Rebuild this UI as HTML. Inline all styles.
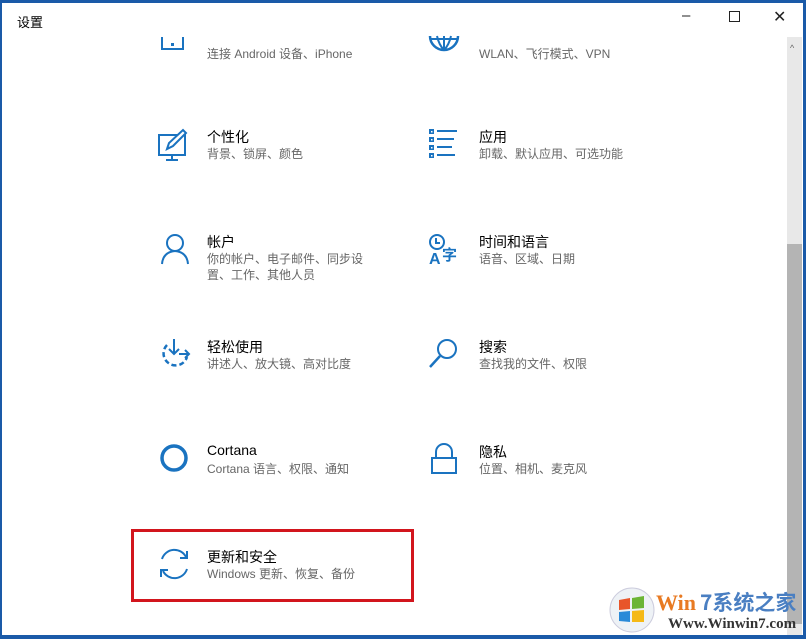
<!DOCTYPE html>
<html><head><meta charset="utf-8"><style>
*{margin:0;padding:0;box-sizing:border-box}
body{width:806px;height:638px;overflow:hidden;background:#1a5aa8;font-family:"Liberation Sans","Noto Sans CJK SC",sans-serif;position:relative}
.win{position:absolute;left:2px;top:3px;width:801px;height:632px;background:#fff;overflow:hidden}
.title{position:absolute;left:15px;top:9px;font-size:13px;color:#000}
.ctl{position:absolute;top:6px;font-size:15px;color:#222}
.sb{position:absolute;left:785px;top:34px;width:15px;height:600px;background:#e8e8e8}
.thumb{position:absolute;left:785px;top:241px;width:15px;height:380px;background:#b4b4b4}
.it{position:absolute}
.it svg{position:absolute;left:0;top:0}
.t{position:absolute;left:50px;top:0;font-size:14px;color:#000;white-space:nowrap}
.s{position:absolute;left:50px;top:19px;font-size:12px;color:#666;line-height:16px;white-space:nowrap}
.red{position:absolute;left:129px;top:526px;width:283px;height:73px;border:3px solid #d2151d}
.logo{position:absolute;left:608px;top:584px;width:192px;height:50px}
</style></head><body>
<div class="win">
<div class="title">设置</div>
<div class="ctl" style="left:680px;top:4px">–</div>
<div class="ctl" style="left:727px;top:8px;width:11px;height:11px;border:1px solid #222"></div>
<div class="ctl" style="left:771px;top:4px;font-size:16px">✕</div>
<div class="sb"></div><div class="thumb"></div>
<div style="position:absolute;left:788px;top:40px;font-size:9px;color:#666">^</div>

<!-- row 0 (clipped) -->
<div class="it" style="left:155px;top:24px">
<svg width="36" height="30"><path d="M5 10 V22 H26 V10" fill="none" stroke="#1a73c0" stroke-width="2"/><rect x="14" y="16" width="3" height="3" fill="#1a73c0"/></svg>
<div class="s" style="left:50px">连接 Android 设备、iPhone</div></div>
<div class="it" style="left:425px;top:24px">
<svg width="36" height="30"><path d="M3 9 A14 14 0 0 0 31 9" fill="none" stroke="#1a73c0" stroke-width="2.5"/><path d="M3 12 H31 M10 9 Q12 18 17 23 M24 9 Q22 18 17 23 M17 9 V23" fill="none" stroke="#1a73c0" stroke-width="2"/></svg>
<div class="s" style="left:52px">WLAN、飞行模式、VPN</div></div>

<!-- row1 -->
<div class="it" style="left:155px;top:124px">
<svg width="36" height="36"><rect x="2" y="8" width="26" height="20" fill="none" stroke="#1a73c0" stroke-width="2"/><path d="M15 28 V33 M9 33 H21" stroke="#1a73c0" stroke-width="2"/><path d="M10 22 L12 16 L26 3 L29 6 L16 19 Z" fill="#fff" stroke="#1a73c0" stroke-width="2"/></svg>
<div class="t">个性化</div><div class="s">背景、锁屏、颜色</div></div>
<div class="it" style="left:425px;top:124px">
<svg width="36" height="36"><g fill="#1a73c0"><rect x="2" y="2" width="5" height="5"/><rect x="2" y="10" width="5" height="5"/><rect x="2" y="18" width="5" height="5"/><rect x="2" y="26" width="5" height="5"/><rect x="10" y="3" width="20" height="2"/><rect x="10" y="11" width="17" height="2"/><rect x="10" y="19" width="15" height="2"/><rect x="10" y="27" width="18" height="2"/></g><g fill="#fff"><rect x="4" y="4" width="1.5" height="1.5"/><rect x="4" y="12" width="1.5" height="1.5"/><rect x="4" y="20" width="1.5" height="1.5"/><rect x="4" y="28" width="1.5" height="1.5"/></g></svg>
<div class="t" style="left:52px">应用</div><div class="s" style="left:52px">卸载、默认应用、可选功能</div></div>

<!-- row2 -->
<div class="it" style="left:155px;top:229px">
<svg width="36" height="36"><circle cx="18" cy="11" r="8" fill="none" stroke="#1a73c0" stroke-width="2"/><path d="M5 32 Q6 20 18 19 Q30 20 31 32" fill="none" stroke="#1a73c0" stroke-width="2"/></svg>
<div class="t">帐户</div><div class="s">你的帐户、电子邮件、同步设<br>置、工作、其他人员</div></div>
<div class="it" style="left:425px;top:229px">
<svg width="36" height="36"><circle cx="10" cy="10" r="7" fill="none" stroke="#1a73c0" stroke-width="2"/><path d="M9 6 V11 H13" fill="none" stroke="#1a73c0" stroke-width="2"/><text x="2" y="32" font-size="16" font-family="Liberation Sans" fill="#1a73c0" font-weight="bold">A</text><text x="15" y="28" font-size="15" font-family="Noto Sans CJK SC" fill="#1a73c0" font-weight="bold">字</text></svg>
<div class="t" style="left:52px">时间和语言</div><div class="s" style="left:52px">语音、区域、日期</div></div>

<!-- row3 -->
<div class="it" style="left:155px;top:334px">
<svg width="36" height="36"><path d="M10 8 A12 12 0 1 0 30 20" fill="none" stroke="#1a73c0" stroke-width="2.5" stroke-dasharray="5 3"/><path d="M17 2 V17 M12 12 L17 17 L22 12 M22 17 H32 M28 13 L32 17 L28 21" fill="none" stroke="#1a73c0" stroke-width="2"/></svg>
<div class="t">轻松使用</div><div class="s">讲述人、放大镜、高对比度</div></div>
<div class="it" style="left:425px;top:334px">
<svg width="36" height="36"><circle cx="20" cy="12" r="9" fill="none" stroke="#1a73c0" stroke-width="2"/><path d="M13 19 L3 30" stroke="#1a73c0" stroke-width="2.5"/></svg>
<div class="t" style="left:52px">搜索</div><div class="s" style="left:52px">查找我的文件、权限</div></div>

<!-- row4 -->
<div class="it" style="left:155px;top:439px">
<svg width="36" height="36"><circle cx="17" cy="16" r="12" fill="none" stroke="#1a73c0" stroke-width="3.5"/></svg>
<div class="t">Cortana</div><div class="s">Cortana 语言、权限、通知</div></div>
<div class="it" style="left:425px;top:439px">
<svg width="36" height="36"><path d="M9 16 V10 A8 8 0 0 1 25 10 V16" fill="none" stroke="#1a73c0" stroke-width="2"/><rect x="5" y="16" width="24" height="15" fill="none" stroke="#1a73c0" stroke-width="2"/></svg>
<div class="t" style="left:52px">隐私</div><div class="s" style="left:52px">位置、相机、麦克风</div></div>

<!-- row5 -->
<div class="it" style="left:155px;top:544px">
<svg width="36" height="36"><path d="M5 12 A13 13 0 0 1 29 10" fill="none" stroke="#1a73c0" stroke-width="2"/><path d="M30 4 V11 H23" fill="none" stroke="#1a73c0" stroke-width="2"/><path d="M30 22 A13 13 0 0 1 6 24" fill="none" stroke="#1a73c0" stroke-width="2"/><path d="M4 30 V23 H11" fill="none" stroke="#1a73c0" stroke-width="2"/></svg>
<div class="t">更新和安全</div><div class="s">Windows 更新、恢复、备份</div></div>

<div class="red"></div>
</div>
<div class="logo">
<svg width="192" height="50"><circle cx="24" cy="26" r="22" fill="#eef2f6" stroke="#ccd" stroke-width="1"/><path d="M11 16 L22 14 L22 25 L11 26Z" fill="#e8552a"/><path d="M24 14 L36 12 L36 24 L24 25Z" fill="#6bb535"/><path d="M11 28 L22 27 L22 38 L11 37Z" fill="#2a8ad8"/><path d="M24 27 L36 26 L36 38 L24 38Z" fill="#f5b916"/>
<text x="48" y="26" font-size="22" font-weight="bold" font-family="Liberation Serif" fill="#e87a22">Win</text><text x="92" y="26" font-size="21" font-weight="bold" font-family="Noto Sans CJK SC" fill="#4a7fc2">7系统之家</text>
<text x="60" y="44" font-size="15" font-weight="bold" font-family="Liberation Serif" fill="#333">Www.Winwin7.com</text></svg>
</div>
</body></html>
